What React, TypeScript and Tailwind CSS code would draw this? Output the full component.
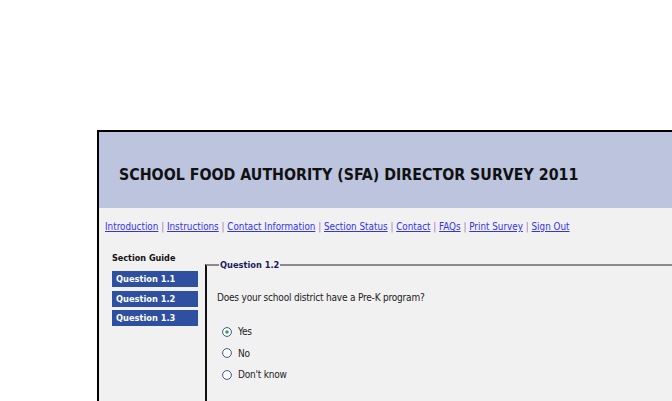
import { useState } from 'react'

const LINKS = [
  'Introduction',
  'Instructions',
  'Contact Information',
  'Section Status',
  'Contact',
  'FAQs',
  'Print Survey',
  'Sign Out',
]

const QUESTIONS = ['Question 1.1', 'Question 1.2', 'Question 1.3']

const OPTIONS = ['Yes', 'No', "Don't know"]

function Radio({ checked }: { checked: boolean }) {
  return (
    <svg width="10" height="10" viewBox="0 0 10 10" className="shrink-0">
      <circle cx="5" cy="5" r="4.4" fill="#fff" stroke="#3d5a80" strokeWidth="1" />
      {checked && <circle cx="5" cy="5" r="1.8" fill="#2fa84f" />}
    </svg>
  )
}

export default function App() {
  const [answer, setAnswer] = useState('Yes')

  return (
    <div
      className="h-[401px] w-[672px] overflow-hidden bg-white"
      style={{ fontFamily: '"DejaVu Sans Condensed", "Liberation Sans", sans-serif' }}
    >
      <div className="ml-[97px] mt-[130px] w-[620px] border-l-2 border-t-2 border-black bg-[#f1f1f1]">
        {/* Header banner */}
        <div className="h-[76px] bg-[#bcc4de] pl-[20px] pt-[33px]">
          <h1 className="text-[15.8px] font-bold leading-[20px] text-[#111]">
            SCHOOL FOOD AUTHORITY (SFA) DIRECTOR SURVEY 2011
          </h1>
        </div>

        {/* Top links */}
        <div className="pl-[6px] pt-[12px] text-[9.8px] leading-[14px]">
          {LINKS.map((l, i) => (
            <span key={l}>
              {i > 0 && <span className="text-[#a070b0]"> | </span>}
              <a href="#" className="text-[#3333ee] underline">
                {l}
              </a>
            </span>
          ))}
        </div>

        <div className="flex pt-[17px]">
          {/* Section guide */}
          <div className="ml-[13px] w-[86px]">
            <div className="text-[9px] font-bold leading-[14px] text-[#111]">Section Guide</div>
            <div className="mt-[6px] flex flex-col gap-[3.5px]">
              {QUESTIONS.map((q) => (
                <div
                  key={q}
                  className="flex h-[16px] items-center bg-[#2f4fa0] pl-[4px] text-[9.2px] font-bold text-white"
                >
                  {q}
                </div>
              ))}
            </div>
          </div>

          {/* Question fieldset */}
          <fieldset className="ml-[7px] mt-[7px] h-[200px] flex-1 border-l-2 border-t-2 border-l-[#111] border-t-[#8a8a8a] pl-[10px]">
            <legend className="ml-[2px] px-[1px] text-[9.2px] font-bold leading-[14px] text-[#1c1c5c]">Question 1.2</legend>
            <p className="mt-[18px] text-[10px] tracking-[-0.2px] text-[#222]">
              Does your school district have a Pre-K program?
            </p>
            <div className="ml-[5px] mt-[20px] flex flex-col gap-[8.5px]">
              {OPTIONS.map((o) => (
                <label
                  key={o}
                  className="flex cursor-pointer items-center gap-[6px] text-[10px] leading-[13px] tracking-[-0.2px] text-[#222]"
                  onClick={() => setAnswer(o)}
                >
                  <Radio checked={answer === o} />
                  {o}
                </label>
              ))}
            </div>
          </fieldset>
        </div>
      </div>
    </div>
  )
}
